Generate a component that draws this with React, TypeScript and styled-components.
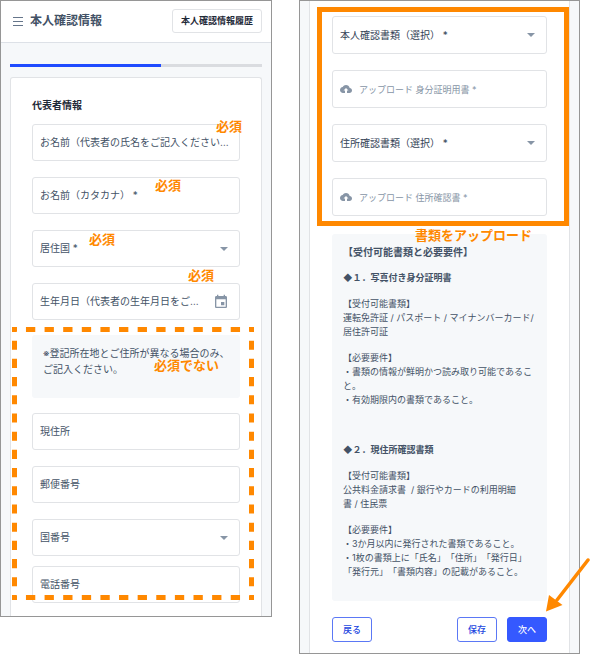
import React from 'react';
import styled, { createGlobalStyle } from 'styled-components';

const colors = {
  text: '#435266',
  strong: '#1f2a38',
  muted: '#8795a6',
  line: '#e1e3e6',
  panel: '#f6f8fa',
  frame: '#969696',
  blue: '#1f4bff',
  mark: '#ff8800',
};

const GlobalStyle = createGlobalStyle`
  *, *::before, *::after { box-sizing: border-box; }
  body {
    margin: 0;
    background: #fff;
    color: ${colors.text};
    font-family: Inter, "Noto Sans CJK JP", sans-serif;
    text-spacing-trim: space-all;
  }
  button, input, select { font: inherit; color: inherit; }
  h1, h2, h3, p { margin: 0; }
`;

const Page = styled.main`
  display: grid;
  grid-template-columns: 272fr 281fr;
  align-items: start;
  gap: 27px;
  padding-right: 22px;
`;

const Screen = styled.section`
  min-width: 0;
  border: 1px solid ${colors.frame};
  background: ${colors.panel};
`;

const Header = styled.header`
  display: flex;
  align-items: center;
  height: 42px;
  padding: 0 9px 2px 11px;
  background: #fff;
  border-bottom: 1px solid #dde1e7;
`;

const IconButton = styled.button`
  display: flex;
  padding: 0;
  border: 0;
  background: none;
  color: ${colors.muted};
`;

const Title = styled.h1`
  flex: 1;
  margin-left: 6px;
  font-size: 12px;
  font-weight: 700;
  line-height: 18px;
  white-space: nowrap;
`;

const HistoryButton = styled.button`
  height: 24px;
  padding: 0 8px;
  border: 1px solid ${colors.line};
  border-radius: 3px;
  background: #fff;
  color: ${colors.strong};
  font-size: 9px;
  font-weight: 700;
  white-space: nowrap;
`;

const ScreenBody = styled.div<{ $top: number }>`
  padding: ${(p) => p.$top}px 9px 0;
`;

const Progress = styled.div`
  height: 3px;
  margin-bottom: 10px;
  background: #dadce0;
`;

const ProgressFill = styled.div`
  width: 60%;
  height: 100%;
  background: ${colors.blue};
`;

const Card = styled.form<{ $continued?: boolean }>`
  padding: ${(p) => (p.$continued ? '15px 22px 11px' : '20px 21px 13px')};
  background: #fff;
  border: 1px solid ${colors.line};
  border-width: ${(p) => (p.$continued ? '0 1px' : '1px 1px 0')};
  border-radius: ${(p) => (p.$continued ? '0' : '3px 3px 0 0')};
`;

const SectionTitle = styled.h2`
  margin-bottom: 12px;
  color: ${colors.strong};
  font-size: 10px;
  font-weight: 700;
  line-height: 14px;
`;

const Stack = styled.div`
  display: flex;
  flex-direction: column;
  gap: 16px;
`;

const Marked = styled.div<{ $gap: number }>`
  position: relative;
  margin-top: ${(p) => p.$gap}px;
`;

const PhoneGroup = styled.div`
  display: flex;
  flex-direction: column;
  gap: 10px;
`;

const FieldBox = styled.div<{ $tall?: boolean }>`
  position: relative;
  display: grid;
  grid-template-columns: minmax(0, 1fr) auto;
  align-items: center;
  height: ${(p) => (p.$tall ? 38 : 37)}px;
  padding-right: 10px;
  border: 1px solid ${colors.line};
  border-radius: 3px;
  background: #fff;
  color: ${(p) => (p.$tall ? '#344356' : colors.text)};
  font-size: 10px;
`;

const FieldLabel = styled.label`
  grid-area: 1 / 1;
  z-index: 1;
  padding-left: 7px;
  overflow: hidden;
  white-space: nowrap;
  text-overflow: ellipsis;
  line-height: 17px;
  pointer-events: none;
`;

const TextInput = styled.input`
  grid-area: 1 / 1 / 2 / 3;
  width: 100%;
  height: 100%;
  padding: 0 7px;
  border: 0;
  background: transparent;
`;

const SelectInput = styled.select`
  grid-area: 1 / 1 / 2 / 3;
  width: 100%;
  height: 100%;
  padding: 0 7px;
  border: 0;
  background: transparent;
  appearance: none;
`;

const Trailing = styled.span`
  grid-area: 1 / 2;
  z-index: 1;
  display: flex;
  color: ${colors.muted};
`;

const UploadBox = styled.label`
  display: flex;
  align-items: center;
  gap: 7px;
  height: 38px;
  padding: 0 7px;
  border: 1px solid ${colors.line};
  border-radius: 3px;
  color: ${colors.muted};
  font-size: 9px;
  white-space: nowrap;
`;

const FileInput = styled.input`
  position: absolute;
  width: 1px;
  height: 1px;
  opacity: 0;
`;

const Tag = styled.span<{ $left: number; $top: number }>`
  position: absolute;
  z-index: 2;
  left: ${(p) => p.$left}px;
  top: ${(p) => p.$top}px;
  color: ${colors.mark};
  font-size: 13px;
  font-weight: 700;
  line-height: 14px;
  white-space: nowrap;
  pointer-events: none;
`;

const AddressNote = styled.div`
  position: relative;
  height: 63px;
  margin-bottom: 15px;
  padding: 10px 4px 0 11px;
  border-radius: 3px;
  background: ${colors.panel};
  font-size: 10px;
  line-height: 16px;
`;

const DashedFrame = styled.svg`
  position: absolute;
  z-index: 2;
  top: -8px;
  left: -20px;
  width: calc(100% + 34px);
  height: calc(100% + 5px);
  overflow: hidden;
  pointer-events: none;
`;

const SolidFrame = styled.div`
  position: absolute;
  inset: -9px -22px -10px -15px;
  border: 5px solid ${colors.mark};
  pointer-events: none;
`;

const Requirements = styled.div`
  position: relative;
  display: flex;
  flex-direction: column;
  gap: 12px;
  margin-top: 18px;
  padding: 11px 0 22px 11px;
  border-radius: 3px;
  background: ${colors.panel};
  font-size: 9px;
  line-height: 14px;
`;

const RequirementsTitle = styled.h2`
  font-size: 10px;
  font-weight: 700;
`;

const DocumentTitle = styled.h3<{ $spaced?: boolean }>`
  margin-top: ${(p) => (p.$spaced ? 24 : 0)}px;
  font-size: 9px;
  font-weight: 700;
`;

const Actions = styled.div`
  display: flex;
  gap: 10px;
  margin-top: 16px;
`;

const ActionButton = styled.button<{ $primary?: boolean }>`
  width: 40px;
  height: 25px;
  padding: 0;
  border: 1px solid ${(p) => (p.$primary ? '#3559ff' : '#5b78f5')};
  border-radius: 3px;
  background: ${(p) => (p.$primary ? '#3559ff' : '#fff')};
  color: ${(p) => (p.$primary ? '#fff' : '#2448e0')};
  font-size: 9px;
  font-weight: 500;
`;

const Spacer = styled.span`
  flex: 1;
`;

const Pointed = styled.div`
  position: relative;
`;

const Arrow = styled.svg`
  position: absolute;
  left: 39px;
  bottom: 30px;
  pointer-events: none;
`;

const MenuIcon = () => (
  <svg width="12" height="12" viewBox="0 0 12 12" stroke="#65758a" strokeWidth="1" aria-hidden="true">
    <path d="M1 2.5h10M1 6.5h10M1 10.5h10" />
  </svg>
);

const CaretIcon = () => (
  <svg width="10" height="6" viewBox="0 0 10 6" fill="currentColor" aria-hidden="true">
    <path d="M1 1h8L5 5z" />
  </svg>
);

const CalendarIcon = () => (
  <svg width="16" height="16" viewBox="0 0 24 24" fill="currentColor" aria-hidden="true">
    <path d="M17 12h-5v5h5v-5zM16 1v2H8V1H6v2H5c-1.11 0-1.99.9-1.99 2L3 19c0 1.1.89 2 2 2h14c1.1 0 2-.9 2-2V5c0-1.1-.9-2-2-2h-1V1h-2zm3 18H5V8h14v11z" />
  </svg>
);

const CloudIcon = () => (
  <svg width="12" height="12" viewBox="0 0 24 24" fill="currentColor" aria-hidden="true">
    <path d="M19.35 10.04C18.67 6.59 15.64 4 12 4 9.11 4 6.6 5.64 5.35 8.04 2.34 8.36 0 10.91 0 14c0 3.31 2.69 6 6 6h4v-5H7l5-5 5 5h-3v5h5c2.76 0 5-2.24 5-5 0-2.64-2.05-4.78-4.65-4.96z" />
  </svg>
);

type FieldProps = {
  id: string;
  label: string;
  tall?: boolean;
  children?: React.ReactNode;
};

const TextField = ({ id, label, children }: FieldProps) => (
  <FieldBox>
    <FieldLabel htmlFor={id}>{label}</FieldLabel>
    <TextInput id={id} type="text" />
    {children}
  </FieldBox>
);

const SelectField = ({ id, label, tall, children }: FieldProps) => (
  <FieldBox $tall={tall}>
    <FieldLabel htmlFor={id}>{label}</FieldLabel>
    <SelectInput id={id} defaultValue="">
      <option value="" />
    </SelectInput>
    <Trailing>
      <CaretIcon />
    </Trailing>
    {children}
  </FieldBox>
);

const UploadField = ({ label }: { label: string }) => (
  <UploadBox>
    <CloudIcon />
    {label}
    <FileInput type="file" />
  </UploadBox>
);

export default function App() {
  return (
    <>
      <GlobalStyle />
      <Page>
        <Screen>
          <Header>
            <IconButton type="button" aria-label="メニュー">
              <MenuIcon />
            </IconButton>
            <Title>本人確認情報</Title>
            <HistoryButton type="button">本人確認情報履歴</HistoryButton>
          </Header>
          <ScreenBody $top={21}>
            <Progress role="progressbar" aria-valuenow={60}>
              <ProgressFill />
            </Progress>
            <Card>
              <SectionTitle>代表者情報</SectionTitle>
              <Stack>
                <TextField id="name" label="お名前（代表者の氏名をご記入ください…">
                  <Tag $left={183} $top={-6}>必須</Tag>
                </TextField>
                <TextField id="kana" label="お名前（カタカナ） *">
                  <Tag $left={122} $top={0}>必須</Tag>
                </TextField>
                <SelectField id="country" label="居住国 *">
                  <Tag $left={56} $top={1}>必須</Tag>
                </SelectField>
                <TextField id="birthday" label="生年月日（代表者の生年月日をご…">
                  <Trailing>
                    <IconButton type="button" aria-label="日付を選択">
                      <CalendarIcon />
                    </IconButton>
                  </Trailing>
                  <Tag $left={155} $top={-16}>必須</Tag>
                </TextField>
              </Stack>
              <Marked $gap={15}>
                <AddressNote>
                  <p>
                    ※登記所在地とご住所が異なる場合のみ、
                    <br />
                    ご記入ください。
                  </p>
                  <Tag $left={122} $top={23}>必須でない</Tag>
                </AddressNote>
                <Stack>
                  <TextField id="address" label="現住所" />
                  <TextField id="postal" label="郵便番号" />
                  <PhoneGroup>
                    <SelectField id="dial" label="国番号" />
                    <TextField id="phone" label="電話番号" />
                  </PhoneGroup>
                </Stack>
                <DashedFrame stroke={colors.mark} strokeWidth="10" strokeDasharray="1 1" strokeDashoffset="0.5" aria-hidden="true">
                  <line x1="0" y1="0" x2="100%" y2="0" pathLength="26" />
                  <line x1="0" y1="100%" x2="100%" y2="100%" pathLength="26" />
                  <line x1="0" y1="0" x2="0" y2="100%" pathLength="30" />
                  <line x1="100%" y1="0" x2="100%" y2="100%" pathLength="30" />
                </DashedFrame>
              </Marked>
            </Card>
          </ScreenBody>
        </Screen>

        <Screen>
          <ScreenBody $top={0}>
            <Card $continued>
              <Marked $gap={0}>
                <Stack>
                  <SelectField id="id-doc" label="本人確認書類（選択） *" tall />
                  <UploadField label="アップロード 身分証明用書 *" />
                  <SelectField id="address-doc" label="住所確認書類（選択） *" tall />
                  <UploadField label="アップロード 住所確認書 *" />
                </Stack>
                <SolidFrame />
              </Marked>
              <Requirements>
                <Tag $left={83} $top={-6}>書類をアップロード</Tag>
                <RequirementsTitle>【受付可能書類と必要要件】</RequirementsTitle>
                <DocumentTitle>◆１．写真付き身分証明書</DocumentTitle>
                <p>
                  【受付可能書類】
                  <br />
                  運転免許証 / パスポート / マイナンバーカード/
                  <br />
                  居住許可証
                </p>
                <p>
                  【必要要件】
                  <br />
                  ・書類の情報が鮮明かつ読み取り可能であるこ
                  <br />
                  と。
                  <br />
                  ・有効期限内の書類であること。
                </p>
                <DocumentTitle $spaced>◆２．現住所確認書類</DocumentTitle>
                <p>
                  【受付可能書類】
                  <br />
                  公共料金請求書&nbsp; / 銀行やカードの利用明細
                  <br />
                  書 / 住民票
                </p>
                <p>
                  【必要要件】
                  <br />
                  ・3か月以内に発行された書類であること。
                  <br />
                  ・1枚の書類上に「氏名」「住所」「発行日」
                  <br />
                  「発行元」「書類内容」の記載があること。
                </p>
              </Requirements>
              <Actions>
                <ActionButton type="button">戻る</ActionButton>
                <Spacer />
                <ActionButton type="button">保存</ActionButton>
                <Pointed>
                  <ActionButton type="submit" $primary>次へ</ActionButton>
                  <Arrow width="44" height="54" viewBox="0 0 44 54" aria-hidden="true">
                    <path d="M42 2L11 42" fill="none" stroke={colors.mark} strokeWidth="3.5" strokeLinecap="round" />
                    <path d="M0 53.5L3 37 16.500 47z" fill={colors.mark} />
                  </Arrow>
                </Pointed>
              </Actions>
            </Card>
          </ScreenBody>
        </Screen>
      </Page>
    </>
  );
}
